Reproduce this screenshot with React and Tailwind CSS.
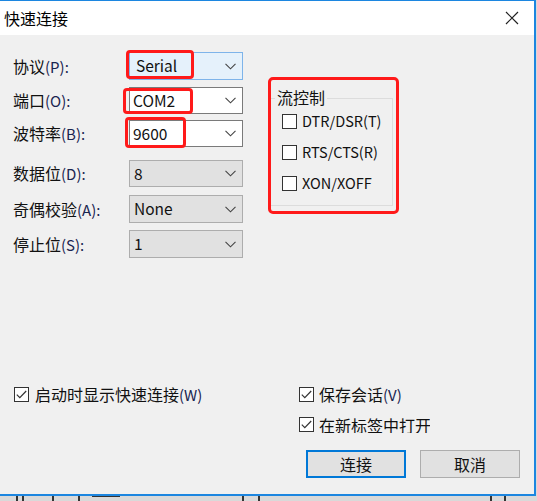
import React from 'react';

const font = { fontFamily: '"Noto Sans CJK SC", "Noto Sans", sans-serif' };

const Chevron = () => (
  <svg width="11" height="7" viewBox="0 0 11 7" className="shrink-0">
    <path d="M0.5 0.8 L5.5 5.8 L10.5 0.8" fill="none" stroke="#444" strokeWidth="1.1" />
  </svg>
);

const Combo = ({ value, kind, className = '' }) => {
  const styles = {
    focus: 'bg-[#e5f1fb] border-[#7eb4ea] pl-[6px]',
    edit: 'bg-white border-[#7a7a7a] pl-[3px]',
    plain: 'bg-[#e1e1e1] border-[#adadad] pl-[4px]',
  };
  return (
    <div
      className={`w-[114px] h-[27px] border flex items-center justify-between pr-[6px] text-[15.5px] text-[#111] ${styles[kind]} ${className}`}
    >
      <span className="leading-none">{value}</span>
      <Chevron />
    </div>
  );
};

const Check = ({ checked }) => (
  <span className="w-[15px] h-[15px] border border-[#333] bg-white flex items-center justify-center shrink-0">
    {checked && (
      <svg width="11" height="9" viewBox="0 0 11 9">
        <path d="M0.8 4.6 L3.8 7.6 L10.2 1" fill="none" stroke="#333" strokeWidth="1.2" />
      </svg>
    )}
  </span>
);

const rows = [
  { label: '协议', key: 'P', value: 'Serial', kind: 'focus', mt: 'mt-0', h: 'h-[28px]' },
  { label: '端口', key: 'O', value: 'COM2', kind: 'edit', mt: 'mt-[7px]', h: 'h-[27px]' },
  { label: '波特率', key: 'B', value: '9600', kind: 'edit', mt: 'mt-[6px]', h: 'h-[27px]' },
  { label: '数据位', key: 'D', value: '8', kind: 'plain', mt: 'mt-[13px]', h: 'h-[27px]' },
  { label: '奇偶校验', key: 'A', value: 'None', kind: 'plain', mt: 'mt-[8px]', h: 'h-[28px]' },
  { label: '停止位', key: 'S', value: '1', kind: 'plain', mt: 'mt-[7px]', h: 'h-[28px]' },
];

export default function App() {
  return (
    <div className="w-[537px] h-[501px] bg-[#d9d9d9] overflow-hidden relative" style={font}>
      <div className="w-[536px] h-[496px] flex flex-col border-t border-r-2 border-b-2 border-[#1c86e0] bg-white">
        {/* title bar */}
        <div className="h-[34px] flex items-center justify-between pl-[4px] pr-[15px] bg-white">
          <span className="text-[16px] text-black leading-none">快速连接</span>
          <svg width="14" height="14" viewBox="0 0 14 14">
            <path d="M1 1 L13 13 M13 1 L1 13" stroke="#222" strokeWidth="1.2" />
          </svg>
        </div>

        {/* body */}
        <div className="flex-1 bg-[#f0f0f0] relative flex flex-col">
          <div className="flex pt-[17px]">
            {/* left column */}
            <div className="flex flex-col pl-[13px]">
              {rows.map((r) => (
                <div key={r.key} className={`flex items-center ${r.mt} ${r.h}`}>
                  <span className="w-[116px] text-[16px] text-[#111] whitespace-nowrap">
                    {r.label}
                    <span className="text-[15px] text-[#1a2550]">({r.key}):</span>
                  </span>
                  <Combo value={r.value} kind={r.kind} className={r.h} />
                </div>
              ))}
            </div>

            {/* flow control group */}
            <div className="ml-[25px] mt-[46px] w-[125px] h-[108px] border border-[#dcdcdc] relative">
              <span className="absolute left-[6px] top-[-12px] bg-[#f0f0f0] px-[2px] text-[16px] text-[#111] leading-[20px]">
                流控制
              </span>
              <div className="flex flex-col pl-[13px] pt-[14px] gap-[15px]">
                {['DTR/DSR(T)', 'RTS/CTS(R)', 'XON/XOFF'].map((t) => (
                  <div key={t} className="flex items-center gap-[5px] h-[16px]">
                    <Check />
                    <span className="text-[14.5px] text-[#111] leading-none">{t}</span>
                  </div>
                ))}
              </div>
            </div>
          </div>

          {/* bottom */}
          <div className="flex-1" />
          <div className="flex pb-[16px]">
            <div className="w-[299px] pl-[14px] pt-[1px] shrink-0">
              <div className="flex items-center gap-[6px] h-[16px]">
                <Check checked />
                <span className="text-[16px] text-[#111] leading-none whitespace-nowrap">
                  启动时显示快速连接<span className="text-[15px] text-[#1a2550]">(W)</span>
                </span>
              </div>
            </div>
            <div className="flex flex-col">
              <div className="flex items-center gap-[5px] h-[16px] mt-[1px]">
                <Check checked />
                <span className="text-[16px] text-[#111] leading-none whitespace-nowrap">
                  保存会话<span className="text-[15px] text-[#1a2550]">(V)</span>
                </span>
              </div>
              <div className="flex items-center gap-[5px] h-[17px] mt-[14px] w-[131px] overflow-hidden">
                <Check checked />
                <span className="text-[16px] text-[#111] leading-none whitespace-nowrap">在新标签中打开</span>
              </div>
              <div className="flex gap-[14px] mt-[17px] ml-[7px]">
                <button className="w-[100px] h-[28px] border-2 border-[#0078d7] bg-[#e1e1e1] text-[16px] text-[#111] leading-none">
                  连接
                </button>
                <button className="w-[100px] h-[28px] border border-[#adadad] bg-[#e1e1e1] text-[16px] text-[#111] leading-none">
                  取消
                </button>
              </div>
            </div>
          </div>

          {/* red annotation boxes */}
          <div className="absolute left-[126px] top-[15px] w-[68px] h-[29px] border-[3px] border-[#ff1a1a] rounded-[4px]" />
          <div className="absolute left-[123px] top-[53px] w-[70px] h-[26px] border-[3px] border-[#ff1a1a] rounded-[4px]" />
          <div className="absolute left-[125px] top-[82px] w-[61px] h-[31px] border-[3px] border-[#ff1a1a] rounded-[4px]" />
          <div className="absolute left-[268px] top-[42px] w-[131px] h-[137px] border-[3px] border-[#ff1a1a] rounded-[5px]" />
        </div>
      </div>

      {/* background window peeking below */}
      <div className="h-[5px] overflow-hidden relative">
        <div className="absolute top-[-1px] left-[16px] w-[8px] h-[6px] border-x-2 border-[#333]" />
        <div className="absolute top-[-1px] left-[52px] w-[28px] h-[6px] border-x-2 border-[#333]" />
        <div className="absolute top-[-1px] left-[92px] w-[28px] h-[3px] border-t-2 border-[#333]" />
        <div className="absolute top-[-1px] left-[242px] w-[18px] h-[6px] border-x-2 border-[#333]" />
        <div className="absolute top-[-1px] left-[490px] w-[16px] h-[6px] border-x-2 border-[#333]" />
      </div>
    </div>
  );
}
